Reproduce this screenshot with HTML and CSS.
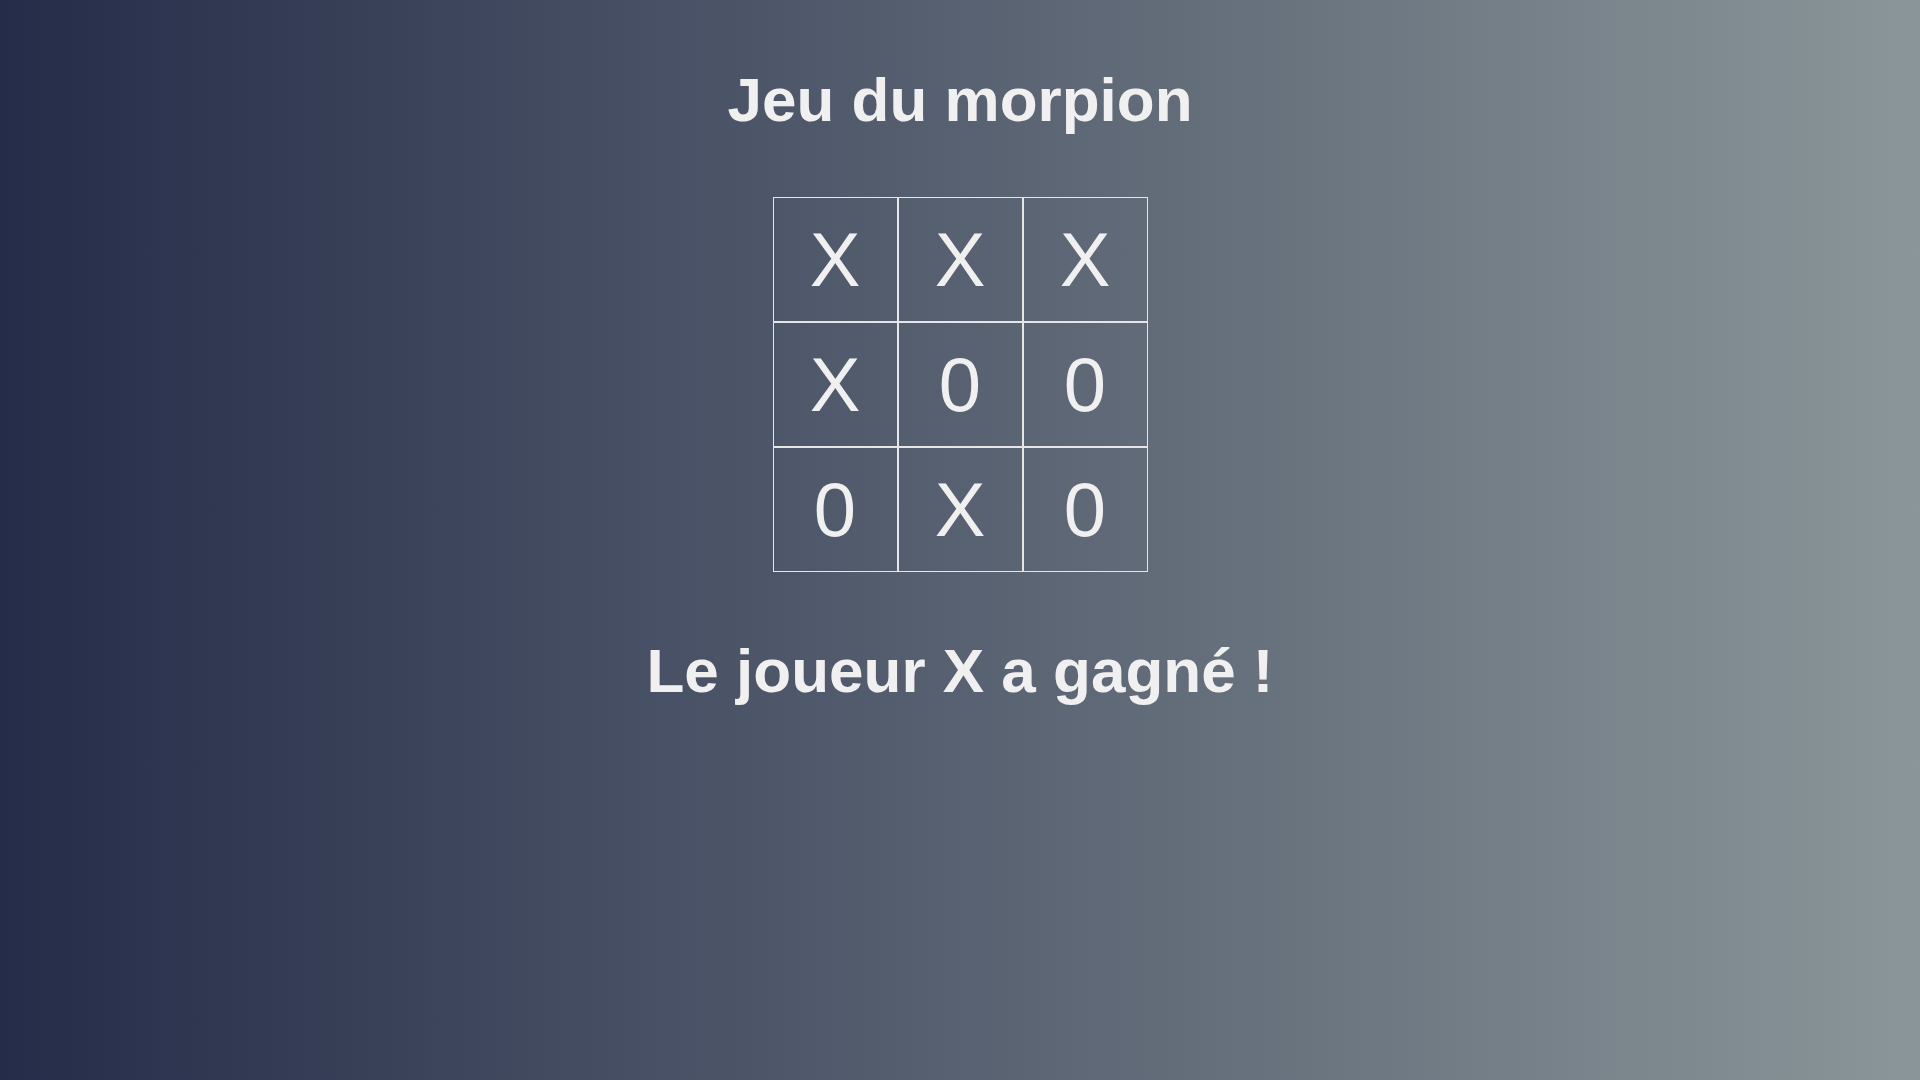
FILE: index.html
```html
<!DOCTYPE html>
<html lang="fr">
<head>
<meta charset="utf-8">
<title>Jeu du morpion</title>
<link rel="stylesheet" href="styles.css">
</head>
<body>
<main class="page">
  <h1 class="title">Jeu du morpion</h1>
  <div class="board">
    <div class="cell">X</div>
    <div class="cell">X</div>
    <div class="cell">X</div>
    <div class="cell">X</div>
    <div class="cell">0</div>
    <div class="cell">0</div>
    <div class="cell">0</div>
    <div class="cell">X</div>
    <div class="cell">0</div>
  </div>
  <h2 class="status">Le joueur X a gagné !</h2>
</main>
</body>
</html>
```

FILE: styles.css
```css
html, body {
  margin: 0;
  padding: 0;
  height: 100%;
}

body {
  background: linear-gradient(to right, #252c49 0%, #8a9699 100%);
  color: #f0f0f0;
  font-family: "Liberation Sans", Arial, sans-serif;
}

.page {
  display: flex;
  flex-direction: column;
  align-items: center;
  padding-top: 64px;
}

.title {
  margin: 0 0 62px;
  font-size: 62px;
  font-weight: bold;
  line-height: normal;
}

.board {
  display: grid;
  grid-template-columns: repeat(3, 125px);
  grid-template-rows: repeat(3, 125px);
}

.cell {
  border: 1px solid #e6e6e6;
  display: flex;
  align-items: center;
  justify-content: center;
  font-size: 76px;
  font-weight: normal;
  color: #f0f0f0;
}

.status {
  margin: 63px 0 0;
  font-size: 62px;
  font-weight: bold;
  line-height: normal;
}
```
